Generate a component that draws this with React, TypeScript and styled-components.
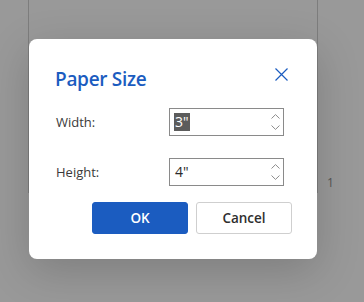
import React from "react";
import styled, { createGlobalStyle } from "styled-components";

const Global = createGlobalStyle`
  html, body { margin: 0; padding: 0; }
  body { font-family: "Open Sans", "Noto Sans", sans-serif; background: #999999; }
`;

const Backdrop = styled.div`
  position: relative;
  width: 364px;
  height: 302px;
  overflow: hidden;
  background: #999999;
  display: flex;
  align-items: flex-start;
`;

const PageSheet = styled.div`
  margin-left: 28px;
  width: 288px;
  height: 193px;
  border-left: 1px solid #7d7d7d;
  border-right: 1px solid #7d7d7d;
`;

const PageNumber = styled.span`
  margin-left: 9px;
  margin-top: 174px;
  font-size: 12px;
  color: #555555;
  font-family: "Open Sans", sans-serif;
`;

const Dialog = styled.div`
  position: absolute;
  left: 29px;
  top: 39px;
  width: 288px;
  height: 220px;
  box-sizing: border-box;
  background: #ffffff;
  border-radius: 8px;
  box-shadow: 0 12px 44px rgba(0, 0, 0, 0.18);
  padding: 22px 25px 0 26px;
  display: flex;
  flex-direction: column;
`;

const Header = styled.div`
  display: flex;
  align-items: flex-start;
  justify-content: space-between;
  height: 26px;
`;

const Title = styled.h2`
  margin: 5px 0 0;
  font-size: 19px;
  line-height: 26px;
  font-weight: 600;
  color: #1b5cc0;
  letter-spacing: -0.3px;
`;

const CloseButton = styled.button`
  border: none;
  background: none;
  padding: 0;
  margin: 6px 4px 0 0;
  width: 14px;
  height: 14px;
  display: flex;
  align-items: center;
  justify-content: center;
  cursor: pointer;
`;

const Form = styled.div`
  margin-top: 21px;
  display: flex;
  flex-direction: column;
  gap: 22px;
`;

const Row = styled.div`
  display: flex;
  align-items: center;
`;

const Label = styled.label`
  width: 114px;
  box-sizing: border-box;
  padding-left: 1px;
  font-size: 13px;
  color: #3a3a3a;
`;

const SpinBox = styled.div`
  width: 115px;
  height: 28px;
  box-sizing: border-box;
  border: 1px solid #8a8a8a;
  display: flex;
  align-items: center;
  padding-left: 4px;
  padding-right: 3px;
`;

const Value = styled.span<{ $selected?: boolean }>`
  flex: 1;
  font-size: 14px;
  line-height: 18px;
  color: #2a2a2a;
  span {
    display: inline-block;
    padding: 0 1px;
    background: ${(p) => (p.$selected ? "#5c5c5c" : "transparent")};
    color: ${(p) => (p.$selected ? "#ffffff" : "#2a2a2a")};
  }
`;

const Spinner = styled.div`
  display: flex;
  flex-direction: column;
  gap: 6px;
  width: 10px;
  align-items: center;
`;

const Buttons = styled.div`
  margin-top: 16px;
  display: flex;
  justify-content: flex-end;
  gap: 8px;
`;

const Button = styled.button<{ $primary?: boolean }>`
  width: 96px;
  height: 32px;
  box-sizing: border-box;
  border-radius: 3px;
  font-family: "Open Sans", sans-serif;
  font-size: 13.5px;
  font-weight: 600;
  border: 1px solid ${(p) => (p.$primary ? "#1b5cc0" : "#cfcfcf")};
  background: ${(p) => (p.$primary ? "#1b5cc0" : "#ffffff")};
  color: ${(p) => (p.$primary ? "#ffffff" : "#2e2e2e")};
`;

const Chevron = ({ up }: { up?: boolean }) => (
  <svg width="9" height="5" viewBox="0 0 9 5">
    <path
      d={up ? "M0.5 4.5 L4.5 0.6 L8.5 4.5" : "M0.5 0.5 L4.5 4.4 L8.5 0.5"}
      fill="none"
      stroke="#8c8c8c"
      strokeWidth="1"
    />
  </svg>
);

const Field = ({ label, value, selected }: { label: string; value: string; selected?: boolean }) => (
  <Row>
    <Label>{label}</Label>
    <SpinBox>
      <Value $selected={selected}>
        <span>{value}</span>
      </Value>
      <Spinner>
        <Chevron up />
        <Chevron />
      </Spinner>
    </SpinBox>
  </Row>
);

export default function App() {
  return (
    <>
      <Global />
      <Backdrop>
        <PageSheet />
        <PageNumber>1</PageNumber>
        <Dialog>
          <Header>
            <Title>Paper Size</Title>
            <CloseButton aria-label="Close">
              <svg width="13" height="13" viewBox="0 0 13 13">
                <path d="M0.5 0.5 L12.5 12.5 M12.5 0.5 L0.5 12.5" stroke="#1b5cc0" strokeWidth="1.2" fill="none" />
              </svg>
            </CloseButton>
          </Header>
          <Form>
            <Field label="Width:" value={'3"'} selected />
            <Field label="Height:" value={'4"'} />
          </Form>
          <Buttons>
            <Button $primary>OK</Button>
            <Button>Cancel</Button>
          </Buttons>
        </Dialog>
      </Backdrop>
    </>
  );
}
